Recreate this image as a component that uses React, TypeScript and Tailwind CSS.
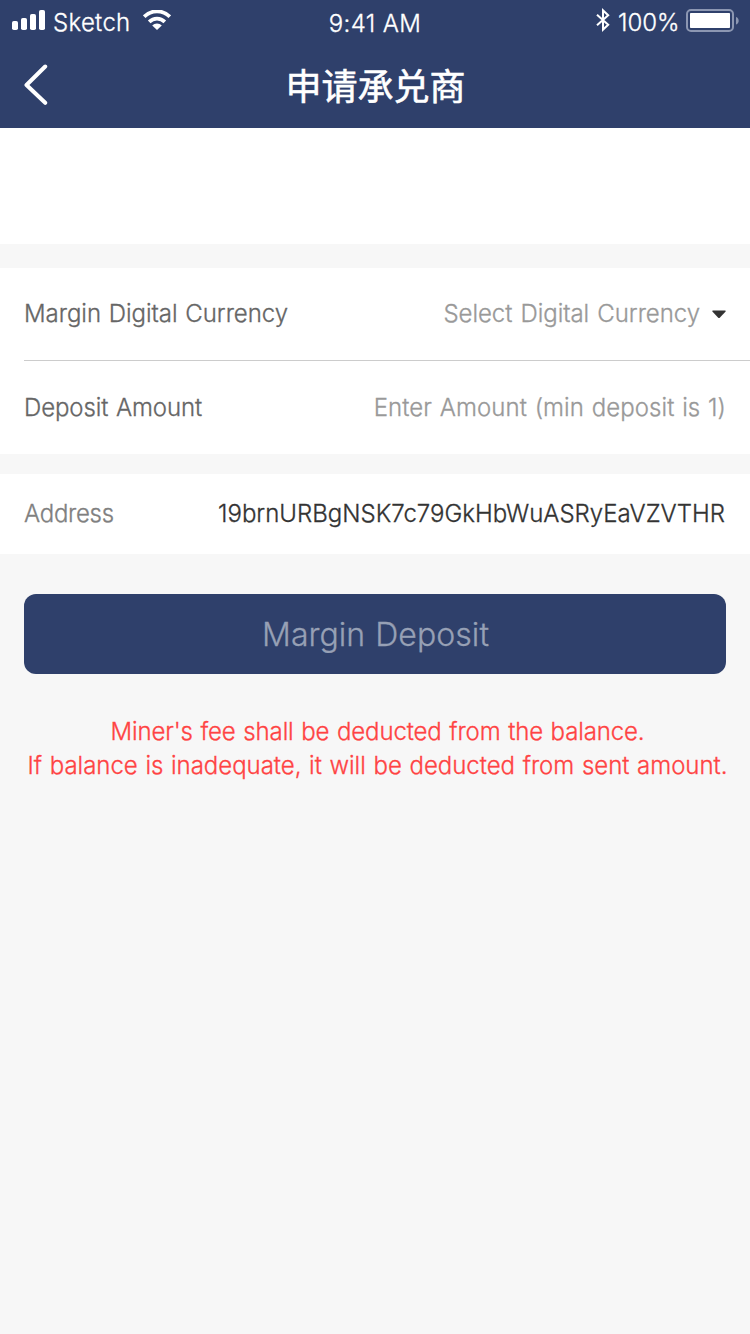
function SignalIcon() {
  return (
    <svg width="34" height="20" viewBox="0 0 34 20" fill="currentColor">
      <rect x="0" y="11" width="6" height="9" rx="1.8" />
      <rect x="9" y="8" width="6" height="12" rx="1.8" />
      <rect x="18" y="4" width="6" height="16" rx="1.8" />
      <rect x="27" y="0" width="6" height="20" rx="1.8" />
    </svg>
  );
}

function WifiIcon() {
  return (
    <svg width="28" height="20" viewBox="0 0 28 20" fill="none" stroke="currentColor" strokeWidth="3.7">
      <path d="M1.2 6.6A18.1 18.1 0 0 1 26.8 6.6" />
      <path d="M6.2 11.9A11 11 0 0 1 21.8 11.9" />
      <path d="M14 20L9.2 15.6A6.8 6.8 0 0 1 18.8 15.6Z" fill="currentColor" stroke="none" />
    </svg>
  );
}

function BluetoothIcon() {
  return (
    <svg width="14" height="24" viewBox="0 0 14 24" fill="none" stroke="currentColor" strokeWidth="2">
      <path d="M1 6.7L12.2 16.8L7 21.6V2.4L12.2 7.2L1 17.3" />
    </svg>
  );
}

function BatteryIcon() {
  return (
    <svg width="53" height="23" viewBox="0 0 53 23">
      <rect x="1" y="1" width="46" height="21" rx="4" fill="none" stroke="#8c97b2" strokeWidth="2" />
      <rect x="4" y="4" width="40" height="15" rx="0.8" fill="#fff" />
      <path d="M50 8C53.6 9 53.6 14.5 50 15.5Z" fill="#8c97b2" />
    </svg>
  );
}

function StatusBar() {
  return (
    <div className="grid h-11 grid-cols-3 items-start text-2xl/6 font-light">
      <div className="flex pl-3">
        <div className="pt-2.5"><SignalIcon /></div>
        <span className="w-[96px] pt-[11px] pl-[7px] tracking-[0.3px]">Sketch</span>
        <div className="pt-2.5 pl-px"><WifiIcon /></div>
      </div>
      <span className="pt-3 text-center tracking-[0.35px]">9:41 AM</span>
      <div className="flex justify-end pr-[11px]">
        <div className="pt-2"><BluetoothIcon /></div>
        <span className="w-[76px] pt-[11px] pl-2">100%</span>
        <div className="pt-[9px]"><BatteryIcon /></div>
      </div>
    </div>
  );
}

function Header() {
  return (
    <header className="h-32 bg-[#2f406b] text-white">
      <StatusBar />
      <div className="grid h-20 grid-cols-[1fr_auto_1fr] items-center">
        <button className="pt-0.5 pl-6" aria-label="Back">
          <svg width="24" height="42" viewBox="0 0 24 42" fill="none" stroke="currentColor" strokeWidth="4" strokeLinecap="round" strokeLinejoin="round">
            <path d="M21.2 2.5L2.5 21L21.2 38.8" />
          </svg>
        </button>
        <h1 className="pl-px font-['Noto_Sans_CJK_SC',sans-serif] text-4xl font-normal [-webkit-text-stroke:0.6px_white]">申请承兑商</h1>
      </div>
    </header>
  );
}

export default function App() {
  return (
    <div className="flex h-[1334px] w-[750px] flex-col overflow-hidden bg-[#f7f7f7] font-['Inter','Noto_Sans_CJK_SC',sans-serif] text-2xl font-light [-webkit-text-stroke:0.3px]">
      <Header />
      <div className="h-[116px] bg-white" />
      <section className="mt-6 bg-white pl-6">
        <div className="flex h-[93px] items-center justify-between border-b border-[#cccccc] pr-6">
          <span className="tracking-[-0.03px] text-[#666666] [word-spacing:1px]">Margin Digital Currency</span>
          <span className="flex items-center gap-3 tracking-[-0.05px] text-[#999999] [word-spacing:1.5px]">
            Select Digital Currency
            <svg width="14" height="9" viewBox="0 0 14 9" fill="#333">
              <path d="M1 .5H13Q14.4 .7 13.4 1.8L8 7.6Q7 8.6 6 7.6L.6 1.8Q-.4 .7 1 .5Z" />
            </svg>
          </span>
        </div>
        <div className="flex h-[93px] items-center justify-between pt-px pr-6">
          <span className="tracking-[-0.1px] text-[#666666] [word-spacing:1px]">Deposit Amount</span>
          <span className="tracking-[0.06px] text-[#999999] [word-spacing:1px]">Enter Amount (min deposit is 1)</span>
        </div>
      </section>
      <section className="mt-5 flex h-20 items-center justify-between bg-white pr-[25px] pl-6">
        <span className="tracking-[-0.3px] text-[#808080]">Address</span>
        <span className="text-[#333333]">19brnURBgNSK7c79GkHbWuASRyEaVZVTHR</span>
      </section>
      <button className="mx-6 mt-10 h-20 rounded-xl bg-[#2f406b] pt-[3px] pl-px text-[32px] font-light tracking-[0.05px] text-[#97a0b5] [word-spacing:1px]">Margin Deposit</button>
      <div className="mt-[41px] flex flex-col items-center pl-[5px] text-2xl/[34px] whitespace-nowrap text-[#ff4343] [word-spacing:1px]">
        <p className="tracking-[-0.12px]">Miner's fee shall be deducted from the balance.</p>
        <p className="tracking-[-0.03px]">If balance is inadequate, it will be deducted from sent amount.</p>
      </div>
    </div>
  );
}
